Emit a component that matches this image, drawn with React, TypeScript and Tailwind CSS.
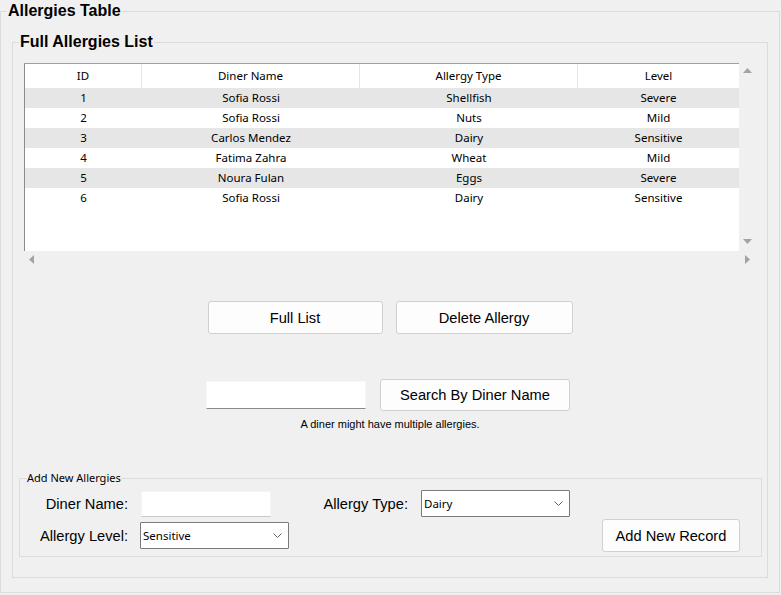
const rows = [
  { id: 1, name: 'Sofia Rossi', type: 'Shellfish', level: 'Severe' },
  { id: 2, name: 'Sofia Rossi', type: 'Nuts', level: 'Mild' },
  { id: 3, name: 'Carlos Mendez', type: 'Dairy', level: 'Sensitive' },
  { id: 4, name: 'Fatima Zahra', type: 'Wheat', level: 'Mild' },
  { id: 5, name: 'Noura Fulan', type: 'Eggs', level: 'Severe' },
  { id: 6, name: 'Sofia Rossi', type: 'Dairy', level: 'Sensitive' },
];

const ui = "font-['Liberation_Sans',Arial,sans-serif]";
const seg = "font-['Noto_Sans',sans-serif]";

const Arrow = ({ dir }: { dir: 'up' | 'down' | 'left' | 'right' }) => {
  const pts = {
    up: '0,5 4.5,0 9,5',
    down: '0,0 4.5,5 9,0',
    left: '5,0 0,4.5 5,9',
    right: '0,0 5,4.5 0,9',
  }[dir];
  const vertical = dir === 'up' || dir === 'down';
  return (
    <svg width={vertical ? 9 : 5} height={vertical ? 5 : 9} className="block">
      <polygon points={pts} fill="#a3a3a3" />
    </svg>
  );
};

const Button = ({ label, className }: { label: string; className: string }) => (
  <button
    className={`${ui} ${className} bg-[#fdfdfd] border border-[#d0d0d0] rounded-[3px] text-[14.67px] text-black`}
  >
    {label}
  </button>
);

const Select = ({ value, className }: { value: string; className: string }) => (
  <div
    className={`${className} ${seg} flex items-center justify-between bg-white border border-[#7a7a7a] rounded-[1px] pl-[2px] pr-[6px] text-[11.5px] text-black`}
  >
    <span>{value}</span>
    <svg width="9" height="5" viewBox="0 0 9 5">
      <polyline points="0.5,0.5 4.5,4.5 8.5,0.5" fill="none" stroke="#606060" strokeWidth="1" />
    </svg>
  </div>
);

const App = () => {
  return (
    <div className="w-[781px] h-[595px] bg-[#f0f0f0] overflow-hidden">
      <fieldset className="w-[780px] border border-[#dcdcdc] pb-[14px]">
        <legend className={`${ui} ml-[6px] px-[1px] text-[16px] font-bold leading-[22px] text-black`}>
          Allergies Table
        </legend>

        <fieldset className="ml-[11px] mt-[9px] w-[756px] border border-[#dcdcdc] pb-[20px]">
          <legend className={`${ui} ml-[6px] px-[1px] text-[16px] font-bold leading-[22px] text-black`}>
            Full Allergies List
          </legend>

          {/* Grid */}
          <div className="ml-[11px] mt-[10px] w-[732px]">
            <div className="flex h-[188px]">
              <div className="w-[715px] bg-white border-l border-t border-[#8c8c8c] border-t-[#a0a0a0]">
                <div className={`${seg} flex h-[24px] items-center text-[11.5px] text-black`}>
                  <div className="w-[117px] h-full flex items-center justify-center border-r border-[#e5e5e5]">ID</div>
                  <div className="w-[218px] h-full flex items-center justify-center border-r border-[#e5e5e5]">Diner Name</div>
                  <div className="w-[218px] h-full flex items-center justify-center border-r border-[#e5e5e5]">Allergy Type</div>
                  <div className="flex-1 h-full flex items-center justify-center">Level</div>
                </div>
                {rows.map((r, i) => (
                  <div
                    key={r.id}
                    className={`${seg} flex h-[20px] items-center text-[11.5px] text-black ${i % 2 === 0 ? 'bg-[#e6e6e6]' : 'bg-white'}`}
                  >
                    <div className="w-[117px] text-center">{r.id}</div>
                    <div className="w-[218px] text-center">{r.name}</div>
                    <div className="w-[218px] text-center">{r.type}</div>
                    <div className="flex-1 text-center">{r.level}</div>
                  </div>
                ))}
              </div>
              <div className="w-[17px] flex flex-col items-center justify-between pt-[5px] pb-[7px] bg-[#f0f0f0]">
                <Arrow dir="up" />
                <Arrow dir="down" />
              </div>
            </div>
            <div className="h-[16px] flex items-center justify-between pl-[5px] pr-[6px]">
              <Arrow dir="left" />
              <Arrow dir="right" />
            </div>
          </div>

          {/* Actions */}
          <div className="mt-[34px] flex justify-center gap-[13px]">
            <Button label="Full List" className="w-[175px] h-[33px]" />
            <Button label="Delete Allergy" className="w-[177px] h-[33px]" />
          </div>

          <div className="mt-[45px] flex justify-center items-center gap-[14px] pr-[4px]">
            <input className="w-[160px] h-[28px] bg-white border border-[#f7f7f7] border-b-[#8a8a8a] outline-none" />
            <Button label="Search By Diner Name" className="w-[190px] h-[32px]" />
          </div>
          <p className={`${ui} mt-[7px] text-center text-[11px] leading-[13px] text-black`}>
            A diner might have multiple allergies.
          </p>

          {/* Add new */}
          <fieldset className="ml-[6px] mr-[5px] mt-[39px] border border-[#dcdcdc] pb-[4px]">
            <legend className={`${seg} ml-[7px] text-[11px] leading-[16px] text-black`}>
              Add New Allergies
            </legend>
            <div className={`${ui} flex items-center mt-[4px] text-[14.67px] text-black`}>
              <span className="w-[108px] text-right">Diner Name:</span>
              <input className="ml-[13px] w-[130px] h-[26px] bg-white border border-[#f5f5f5] border-b-[#c8c8c8] outline-none" />
              <span className="w-[137px] text-right">Allergy Type:</span>
              <Select value="Dairy" className="ml-[13px] w-[149px] h-[27px]" />
            </div>
            <div className={`${ui} flex items-center mt-[2px] text-[14.67px] text-black`}>
              <span className="w-[108px] text-right">Allergy Level:</span>
              <Select value="Sensitive" className="ml-[12px] w-[149px] h-[27px]" />
              <Button label="Add New Record" className="ml-[313px] w-[138px] h-[33px]" />
            </div>
          </fieldset>
        </fieldset>
      </fieldset>
    </div>
  );
};

export default App;
